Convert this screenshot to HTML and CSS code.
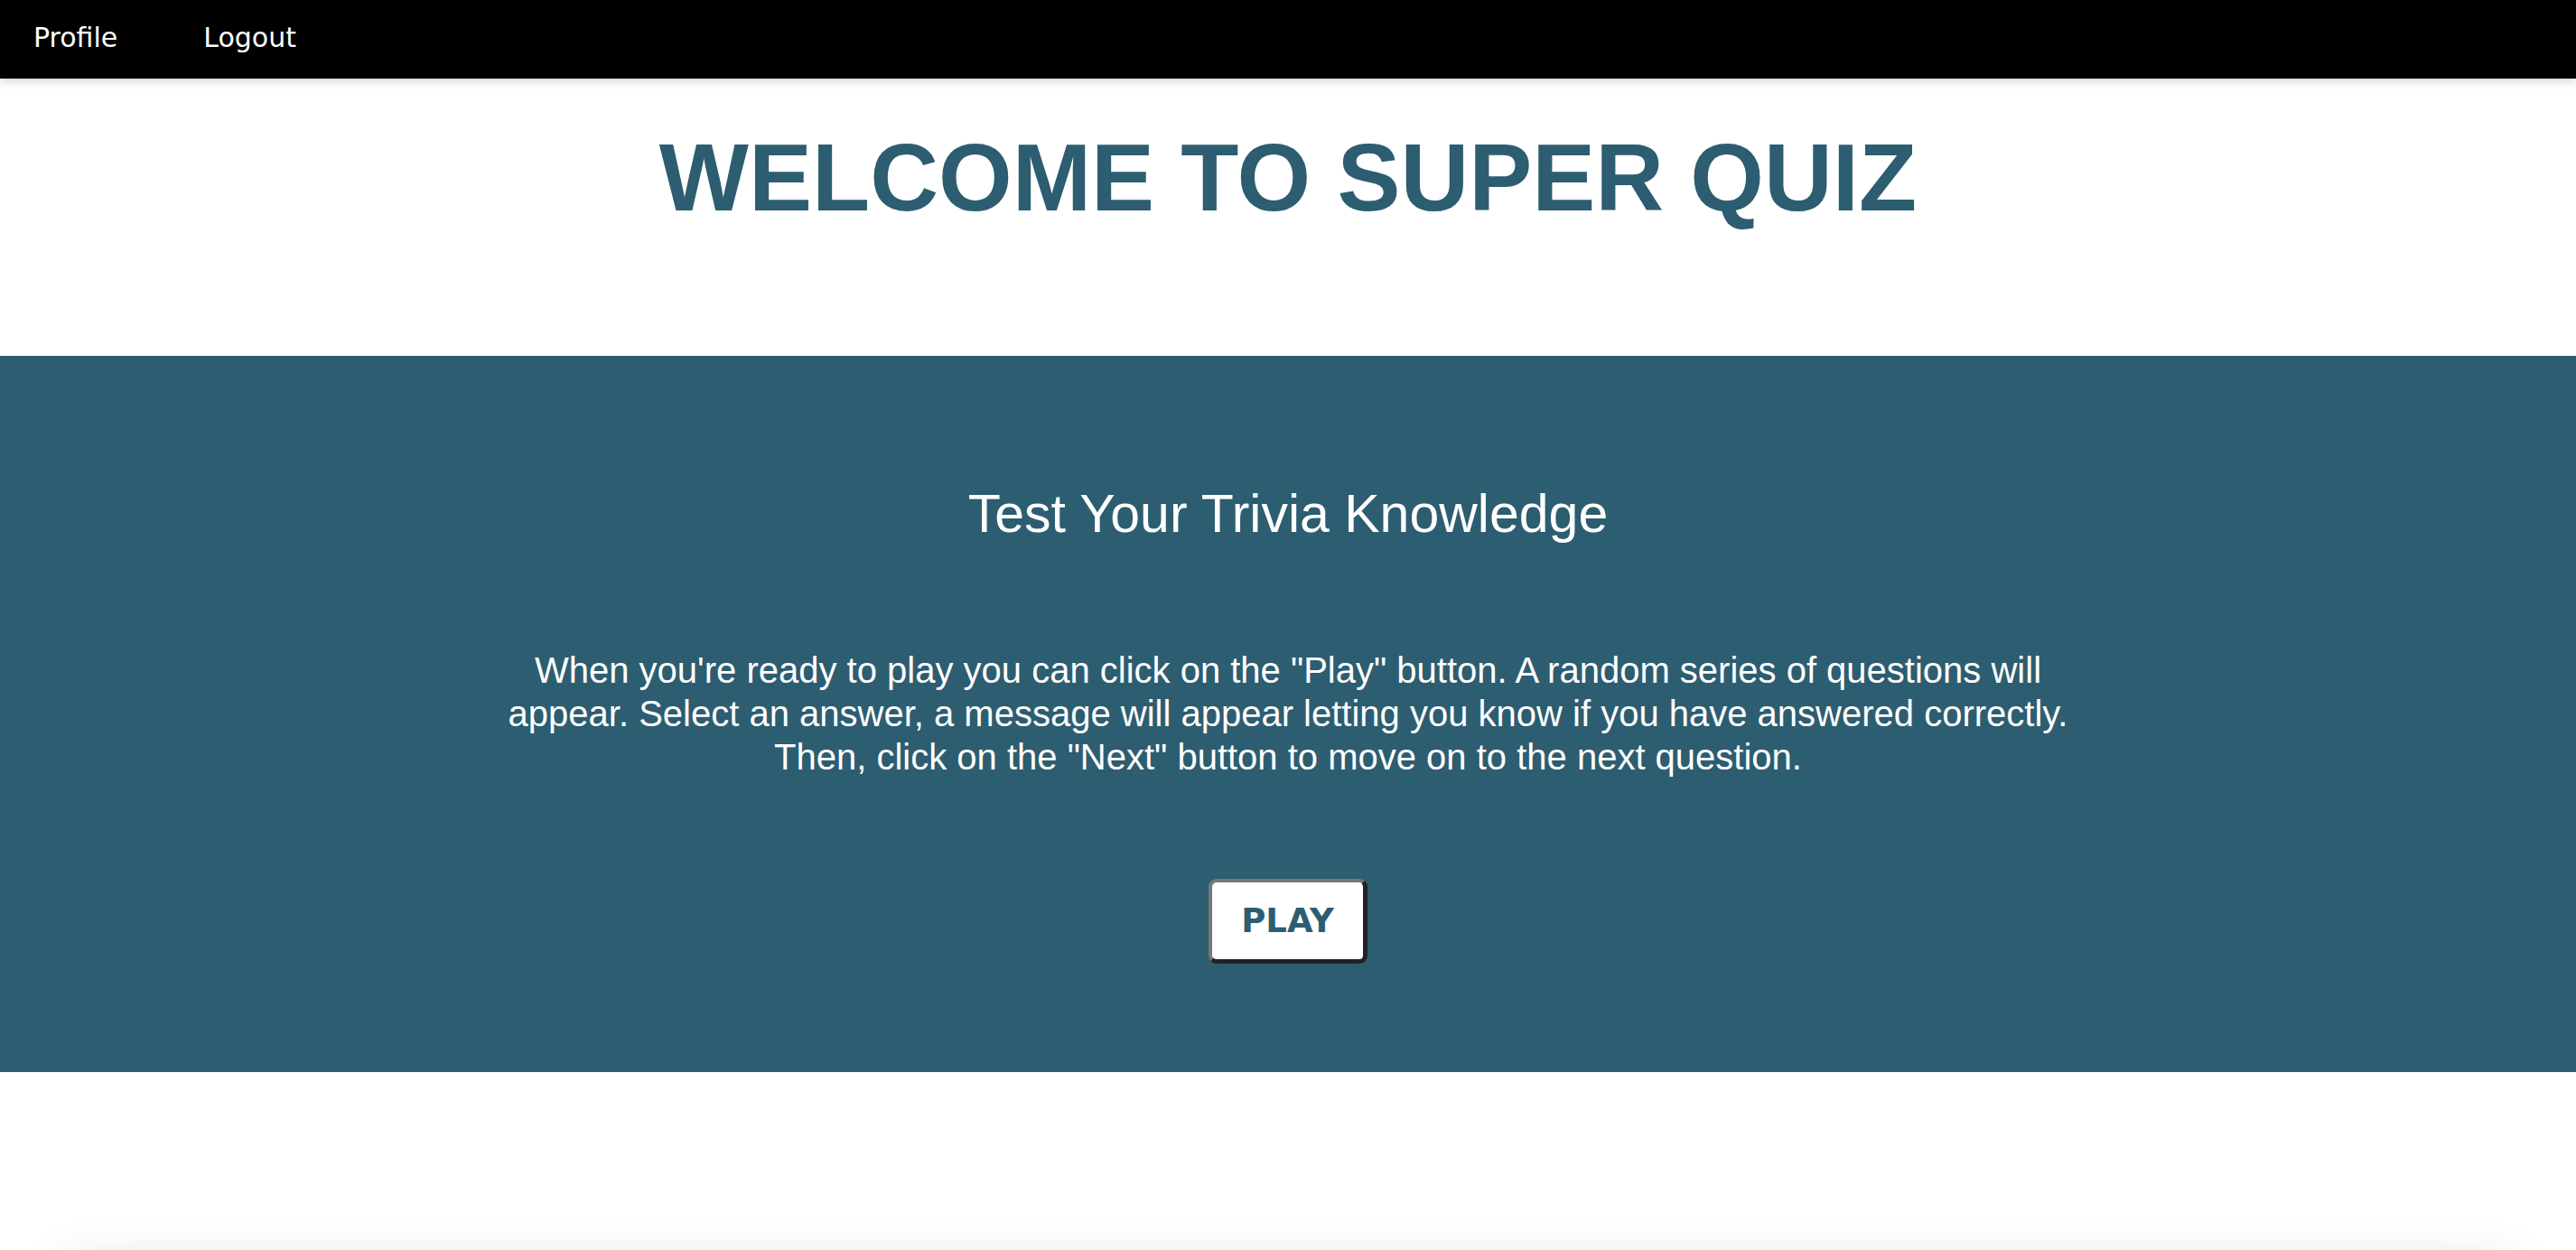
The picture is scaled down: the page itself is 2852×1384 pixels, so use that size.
FILE: index.html
```html
<!DOCTYPE html>
<html lang="en">
<head>
<meta charset="utf-8">
<title>Super Quiz</title>
<link rel="stylesheet" href="styles.css">
</head>
<body>
<nav class="topnav">
  <a class="nav-link" href="#">Profile</a>
  <a class="nav-link" href="#">Logout</a>
</nav>
<header class="hero">
  <h1 class="hero-title">WELCOME TO SUPER QUIZ</h1>
</header>
<section class="intro">
  <h2 class="intro-title">Test Your Trivia Knowledge</h2>
  <p class="intro-text">When you're ready to play you can click on the "Play" button. A random series of questions will appear. Select an answer, a message will appear letting you know if you have answered correctly. Then, click on the "Next" button to move on to the next question.</p>
  <button class="play-btn" type="button">PLAY</button>
</section>
<div class="card"></div>
</body>
</html>
```

FILE: styles.css
```css
html, body {
  margin: 0;
  padding: 0;
  background: #ffffff;
}

body {
  font-family: "Liberation Sans", Arial, sans-serif;
  overflow: hidden;
}

.topnav {
  display: flex;
  gap: 95px;
  background: #000000;
  height: 87px;
  box-sizing: border-box;
  padding: 24px 0 0 37px;
  box-shadow: 0 3px 10px rgba(0, 0, 0, 0.18);
  position: relative;
  z-index: 2;
}

.nav-link {
  font-family: "DejaVu Sans", Verdana, sans-serif;
  font-size: 30px;
  color: #ffffff;
  text-decoration: none;
}

.hero {
  padding: 50px 0 136px;
  text-align: center;
}

.hero-title {
  margin: 0;
  font-family: "Liberation Sans", Arial, sans-serif;
  font-weight: bold;
  font-size: 105px;
  line-height: 1.15;
  color: #2d5d70;
}

.intro {
  background: #2d5d70;
  color: #ffffff;
  text-align: center;
  padding: 142px 0 120px;
  display: flex;
  flex-direction: column;
  align-items: center;
}

.intro-title {
  margin: 0;
  font-weight: normal;
  font-size: 59px;
  line-height: 1.15;
}

.intro-text {
  margin: 114px 0 0;
  max-width: 1760px;
  font-size: 40px;
  line-height: 48px;
}

.play-btn {
  margin-top: 111px;
  width: 176px;
  height: 94px;
  box-sizing: border-box;
  background: #ffffff;
  border-style: solid;
  border-width: 4px 5px 5px 4px;
  border-color: #777777 #222222 #222222 #777777;
  border-radius: 9px;
  font-family: "DejaVu Sans", Verdana, sans-serif;
  font-weight: bold;
  font-size: 37px;
  color: #2d5d70;
  padding: 0;
  display: flex;
  align-items: center;
  justify-content: center;
  cursor: pointer;
}

.card {
  margin: 215px 60px 0;
  height: 300px;
  background: #ffffff;
  border-radius: 40px;
  box-shadow: 0 0 60px rgba(0, 0, 0, 0.14);
}
```
